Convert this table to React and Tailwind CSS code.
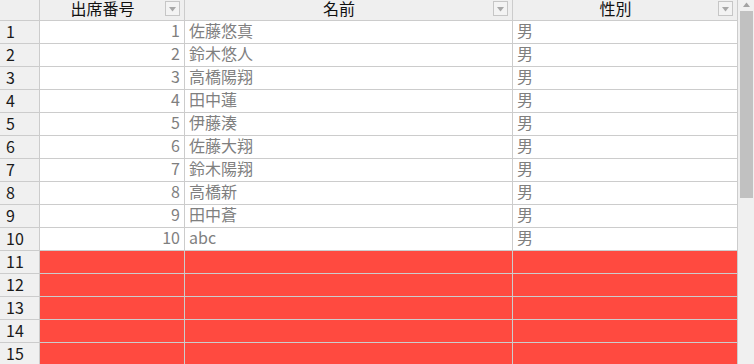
import React from "react";

const rows = [
  [1, "佐藤悠真", "男"],
  [2, "鈴木悠人", "男"],
  [3, "高橋陽翔", "男"],
  [4, "田中蓮", "男"],
  [5, "伊藤湊", "男"],
  [6, "佐藤大翔", "男"],
  [7, "鈴木陽翔", "男"],
  [8, "高橋新", "男"],
  [9, "田中蒼", "男"],
  [10, "abc", "男"],
];

function FilterBtn() {
  return (
    <div className="w-[15px] h-[15px] mt-[1px] border border-[#c6c6c6] bg-[#f3f3f3] flex items-center justify-center shrink-0">
      <svg width="9" height="6" viewBox="0 0 9 6">
        <path d="M1 1 L8 1 L4.5 5.5 Z" fill="#a8a8a8" />
      </svg>
    </div>
  );
}

function HeaderCell({ label, w }) {
  return (
    <div className={`${w} h-[21px] border-r border-b border-[#cccccc] bg-[#efefef] flex items-start pr-[4px]`}>
      <div className="flex-1 text-center text-[16px] leading-[16px] text-[#111]">{label}</div>
      <FilterBtn />
    </div>
  );
}

export default function App() {
  const all = [];
  for (let i = 0; i < 15; i++) all.push(rows[i] || null);
  return (
    <div
      className="w-[754px] h-[364px] overflow-hidden bg-white flex"
      style={{ fontFamily: '"Noto Sans CJK JP", "Noto Sans", sans-serif' }}
    >
      <div className="w-[738px] flex flex-col">
        <div className="flex">
          <div className="w-[40px] h-[21px] border-r border-b border-[#cccccc] bg-[#efefef]" />
          <HeaderCell label="出席番号" w="w-[145px]" />
          <HeaderCell label="名前" w="w-[328px]" />
          <HeaderCell label="性別" w="w-[225px]" />
        </div>
        {all.map((r, i) => {
          const cellBg = r ? "bg-white" : "bg-[#ff4a40]";
          return (
            <div key={i} className="flex shrink-0">
              <div className="w-[40px] h-[23px] border-r border-b border-[#cccccc] bg-[#f0f0f0] pl-[6px] pb-[3px] flex items-center text-[16px] leading-[18px] text-[#1a1a1a]">
                {i + 1}
              </div>
              <div className={`w-[145px] h-[23px] border-r border-b border-[#cccccc] ${cellBg} pr-[4px] pb-[4px] flex items-center justify-end text-[16px] leading-[18px] text-[#7f7f7f]`}>
                {r ? r[0] : ""}
              </div>
              <div className={`w-[328px] h-[23px] border-r border-b border-[#cccccc] ${cellBg} pl-[4px] pb-[4px] flex items-center text-[16px] leading-[18px] text-[#7f7f7f]`}>
                {r ? r[1] : ""}
              </div>
              <div className={`w-[225px] h-[23px] border-r border-b border-[#cccccc] ${cellBg} pl-[4px] pb-[4px] flex items-center text-[16px] leading-[18px] text-[#7f7f7f]`}>
                {r ? r[2] : ""}
              </div>
            </div>
          );
        })}
      </div>
      <div className="w-[16px] h-[364px] bg-[#f0f0f0] flex flex-col">
        <div className="h-[11px] flex justify-center items-start pt-[2px]">
          <svg width="9" height="6" viewBox="0 0 9 6">
            <path d="M4.5 0.5 L8 5 L1 5 Z" fill="#a3a3a3" />
          </svg>
        </div>
        <div className="ml-[2px] w-[13px] h-[187px] bg-[#c1c1c1]" />
      </div>
    </div>
  );
}
